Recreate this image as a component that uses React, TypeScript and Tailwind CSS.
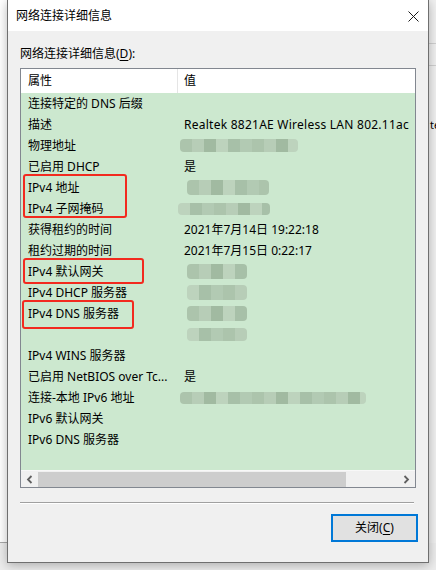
import React from "react";

const shades = [
  "bg-[#a9c1a9]",
  "bg-[#b5cbb5]",
  "bg-[#9db69d]",
  "bg-[#bcd1bc]",
  "bg-[#a4bca4]",
  "bg-[#b0c7b0]",
];

function Blur({ w, h, ml, seed }: { w: number; h: number; ml: number; seed: number }) {
  const n = Math.ceil(w / 12);
  const blocks = Array.from({ length: n }, (_, i) => shades[(i * 7 + seed * 3) % shades.length]);
  return (
    <div
      className="flex overflow-hidden rounded-[4px] blur-[0.6px] opacity-90"
      style={{ width: w, height: h, marginLeft: ml }}
    >
      {blocks.map((c, i) => (
        <div key={i} className={`${c} h-full w-[12px] shrink-0`} />
      ))}
    </div>
  );
}

type Row = { k: string; v?: string; wide?: boolean; blur?: { w: number; h: number; ml: number } };

const rows: Row[] = [
  { k: "连接特定的 DNS 后缀" },
  { k: "描述", v: "Realtek 8821AE Wireless LAN 802.11ac", wide: true },
  { k: "物理地址", blur: { w: 118, h: 13, ml: -4 } },
  { k: "已启用 DHCP", v: "是" },
  { k: "IPv4 地址", blur: { w: 82, h: 15, ml: 3 } },
  { k: "IPv4 子网掩码", blur: { w: 92, h: 12, ml: -6 } },
  { k: "获得租约的时间", v: "2021年7月14日 19:22:18" },
  { k: "租约过期的时间", v: "2021年7月15日 0:22:17" },
  { k: "IPv4 默认网关", blur: { w: 60, h: 15, ml: 3 } },
  { k: "IPv4 DHCP 服务器", blur: { w: 60, h: 15, ml: 3 } },
  { k: "IPv4 DNS 服务器", blur: { w: 60, h: 15, ml: 3 } },
  { k: "", blur: { w: 60, h: 13, ml: 3 } },
  { k: "IPv4 WINS 服务器" },
  { k: "已启用 NetBIOS over Tc...", v: "是" },
  { k: "连接-本地 IPv6 地址", blur: { w: 186, h: 12, ml: -4 } },
  { k: "IPv6 默认网关" },
  { k: "IPv6 DNS 服务器" },
];

export default function App() {
  return (
    <div className="relative w-[436px] h-[570px] overflow-hidden bg-[#ececec] font-['Noto_Sans','Noto_Sans_CJK_SC',sans-serif] text-[12px] text-black">
      {/* window behind */}
      <div className="absolute left-0 top-0 w-[436px] h-[543px] bg-white border-b border-[#a8a8a8]">
        <div className="absolute right-0 top-0 w-[10px] h-[543px] bg-[#f0f0f0] border-l border-[#d8d8d8] overflow-hidden">
          <div className="absolute left-0 right-0 top-[43px] h-px bg-[#d0d0d0]" />
          <div className="absolute left-0 right-0 top-[65px] h-px bg-[#d0d0d0]" />
          <div className="absolute left-[3px] top-[117px] leading-[16px] text-[11px]">te</div>
        </div>
      </div>

      {/* dialog */}
      <div className="absolute left-[7px] top-0 w-[422px] h-[563px] flex flex-col bg-[#f0f0f0] border border-t-0 border-[#6f6f6f] shadow-[0_2px_10px_rgba(0,0,0,0.28)]">
        {/* title bar */}
        <div className="h-[31px] shrink-0 bg-white flex items-center justify-between pl-[8px] pr-[9px]">
          <span className="leading-none text-[12px] pt-[1px]">网络连接详细信息</span>
          <svg width="11" height="11" viewBox="0 0 11 11" className="mt-[1px]">
            <path d="M0.5 0.5 L10.5 10.5 M10.5 0.5 L0.5 10.5" stroke="#1a1a1a" strokeWidth="1" />
          </svg>
        </div>

        {/* body */}
        <div className="flex flex-col pl-[12px] pr-[12px]">
          <div className="mt-[16px] h-[14px] leading-[14px]">
            网络连接详细信息(<span className="underline underline-offset-2">D</span>):
          </div>

          {/* list box */}
          <div className="relative mt-[7px] w-[396px] h-[420px] border border-[#828790] bg-white flex flex-col">
            {/* header */}
            <div className="h-[24px] shrink-0 flex bg-white">
              <div className="w-[157px] pl-[7px] flex items-center border-r border-[#e5e5e5]">属性</div>
              <div className="flex-1 pl-[6px] flex items-center">值</div>
            </div>

            {/* rows */}
            <div className="flex-1 bg-[#cce8cf] overflow-hidden flex flex-col">
              {rows.map((r, i) => (
                <div key={i} className="h-[21px] shrink-0 flex items-center">
                  <div className="w-[157px] shrink-0 pl-[7px] whitespace-nowrap overflow-hidden">{r.k}</div>
                  <div className="flex-1 pl-[6px] whitespace-nowrap overflow-hidden flex items-center">
                    {r.v && <span className={r.wide ? "tracking-[0.25px]" : ""}>{r.v}</span>}
                    {r.blur && <Blur w={r.blur.w} h={r.blur.h} ml={r.blur.ml} seed={i} />}
                  </div>
                </div>
              ))}
            </div>

            {/* horizontal scrollbar */}
            <div className="h-[17px] shrink-0 bg-[#f0f0f0] border-t border-[#f8f8f8] flex items-center">
              <div className="w-[17px] h-full flex items-center justify-center">
                <svg width="7" height="9" viewBox="0 0 7 9">
                  <path d="M5.5 1 L2 4.5 L5.5 8" stroke="#606060" strokeWidth="1.8" fill="none" />
                </svg>
              </div>
              <div className="w-[308px] h-[15px] bg-[#cdcdcd]" />
              <div className="flex-1" />
              <div className="w-[17px] h-full flex items-center justify-center">
                <svg width="7" height="9" viewBox="0 0 7 9">
                  <path d="M1.5 1 L5 4.5 L1.5 8" stroke="#606060" strokeWidth="1.8" fill="none" />
                </svg>
              </div>
            </div>

            {/* red highlight boxes */}
            <div className="absolute left-[2px] top-[105px] w-[104px] h-[44px] border-2 border-[#f22a1f] rounded-[3px]" />
            <div className="absolute left-[2px] top-[189px] w-[121px] h-[26px] border-2 border-[#f22a1f] rounded-[3px]" />
            <div className="absolute left-[1px] top-[231px] w-[112px] h-[29px] border-2 border-[#f22a1f] rounded-[3px]" />
          </div>

          {/* separator */}
          <div className="mt-[14px] w-[394px] h-px bg-[#a0a0a0]" />
          <div className="w-[394px] h-px bg-white" />

          {/* button row */}
          <div className="mt-[10px] flex justify-end">
            <button className="mr-[-2px] w-[87px] h-[28px] border-2 border-[#0078d7] bg-[#e1e1e1] flex items-center justify-center leading-none">
              关闭(<span className="underline underline-offset-2">C</span>)
            </button>
          </div>
        </div>
      </div>
    </div>
  );
}
